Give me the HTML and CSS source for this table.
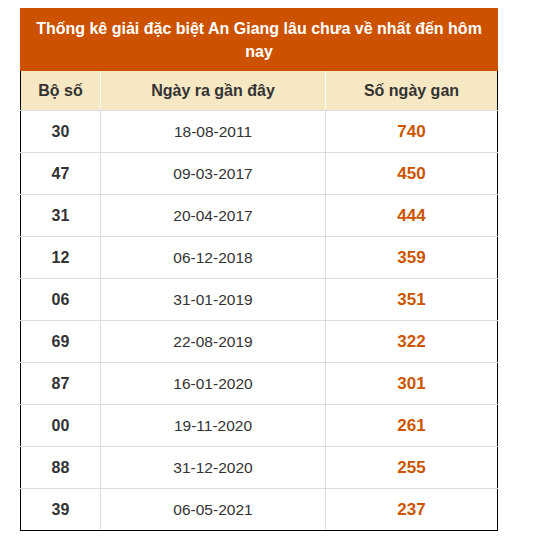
FILE: index.html
```html
<!DOCTYPE html>
<html lang="vi">
<head>
<meta charset="utf-8">
<title>Thống kê</title>
<link rel="stylesheet" href="styles.css">
</head>
<body>
<div class="wrap">
<table class="gan">
<colgroup><col class="c1"><col class="c2"><col class="c3"></colgroup>
<thead>
<tr><th colspan="3" class="title">Thống kê giải đặc biệt An Giang lâu chưa về nhất đến hôm nay</th></tr>
<tr class="head"><th>Bộ số</th><th>Ngày ra gần đây</th><th>Số ngày gan</th></tr>
</thead>
<tbody>
<tr><td class="num">30</td><td>18-08-2011</td><td class="days">740</td></tr>
<tr><td class="num">47</td><td>09-03-2017</td><td class="days">450</td></tr>
<tr><td class="num">31</td><td>20-04-2017</td><td class="days">444</td></tr>
<tr><td class="num">12</td><td>06-12-2018</td><td class="days">359</td></tr>
<tr><td class="num">06</td><td>31-01-2019</td><td class="days">351</td></tr>
<tr><td class="num">69</td><td>22-08-2019</td><td class="days">322</td></tr>
<tr><td class="num">87</td><td>16-01-2020</td><td class="days">301</td></tr>
<tr><td class="num">00</td><td>19-11-2020</td><td class="days">261</td></tr>
<tr><td class="num">88</td><td>31-12-2020</td><td class="days">255</td></tr>
<tr><td class="num">39</td><td>06-05-2021</td><td class="days">237</td></tr>
</tbody>
</table>
</div>
</body>
</html>
```

FILE: styles.css
```css
html, body { margin: 0; padding: 0; background: #fff; }
body { font-family: "Liberation Sans", Arial, sans-serif; color: #333; }
.wrap { padding: 8px 0 0 20px; }
.gan {
  width: 478px;
  border-collapse: collapse;
  border: 1px solid #000;
  table-layout: fixed;
}
.c1 { width: 80px; }
.c2 { width: 225px; }
.gan th, .gan td {
  border: 1px solid #ddd;
  text-align: center;
  padding: 0;
}
.gan .title {
  background: #cc5200;
  color: #fff;
  font-size: 16px;
  font-weight: bold;
  line-height: 23px;
  padding: 8px 14px;
  border: 1px solid #cc5200;
  border-bottom: 0;
}
.gan .head th {
  background: #f6e8c3;
  font-size: 16px;
  font-weight: bold;
  color: #333;
  height: 39px;
  border-top: 0;
  border-color: #f6e8c3 #fff #ddd #fff;
}
.gan .head th:first-child { border-left-color: #000; }
.gan .head th:last-child { border-right-color: #000; }
.gan td {
  height: 41px;
  font-size: 15.5px;
}
.gan td:first-child { border-left-color: #000; }
.gan td:last-child { border-right-color: #000; }
.gan tr:last-child td { border-bottom-color: #000; }
.gan .num { font-weight: bold; font-size: 16px; }
.gan .days { font-weight: bold; color: #cc5500; font-size: 17px; }
```
